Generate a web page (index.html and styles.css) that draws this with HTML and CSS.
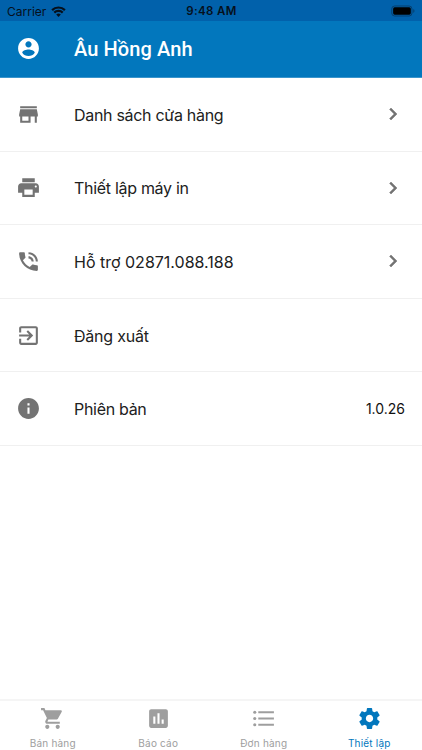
FILE: index.html
```html
<!DOCTYPE html>
<html lang="vi">
<head>
<meta charset="utf-8">
<title>Thiết lập</title>
<link rel="stylesheet" href="styles.css">
</head>
<body>
<div class="status">
  <div class="carrier"><span>Carrier</span>
    <svg class="wifi" viewBox="0 0 16 12"><path d="M8 12 5.500 9.300a3.600 3.600 0 0 1 5 0z"/><path class="arc" d="M3.400 7.200a6.500 6.500 0 0 1 9.200 0M1 4.500a10 10 0 0 1 14 0"/></svg>
  </div>
  <div class="time">9:48 AM</div>
  <div class="battery"><svg viewBox="0 0 26 12"><rect class="shell" x=".8" y=".8" width="21" height="10.400" rx="3"/><rect x="2.200" y="2.200" width="18.400" height="7.600" rx="1.600"/><path class="tip" d="M23.200 4v4c1.600-.6 1.600-3.400 0-4z"/></svg></div>
</div>
<header class="header">
  <svg class="icon" viewBox="0 0 24 24"><path d="M12 2C6.480 2 2 6.480 2 12s4.480 10 10 10 10-4.480 10-10S17.520 2 12 2zm0 3c1.660 0 3 1.340 3 3s-1.340 3-3 3-3-1.340-3-3 1.340-3 3-3zm0 14.200c-2.500 0-4.710-1.280-6-3.220.03-1.990 4-3.080 6-3.080 1.990 0 5.970 1.090 6 3.080-1.290 1.940-3.500 3.220-6 3.220z"/></svg>
  <h1 class="title">Âu Hồng Anh</h1>
</header>
<main class="list">
  <div class="row">
    <svg class="icon" viewBox="0 0 24 24"><path d="M20 4H4v2h16V4zm1 10v-2l-1-5H4l-1 5v2h1v6h10v-6h4v6h2v-6h1zm-9 4H6v-4h6v4z"/></svg>
    <span class="label store">Danh sách cửa hàng</span>
    <svg class="chevron" viewBox="0 0 24 24"><path d="M10 6 8.590 7.410 13.170 12l-4.580 4.590L10 18l6-6z"/></svg>
  </div>
  <div class="row">
    <svg class="icon" viewBox="0 0 24 24"><path d="M19 8H5c-1.660 0-3 1.340-3 3v6h4v4h12v-4h4v-6c0-1.660-1.340-3-3-3zm-3 11H8v-5h8v5zm3-7c-.55 0-1-.45-1-1s.45-1 1-1 1 .45 1 1-.45 1-1 1zm-1-9H6v4h12V3z"/></svg>
    <span class="label printer">Thiết lập máy in</span>
    <svg class="chevron" viewBox="0 0 24 24"><path d="M10 6 8.590 7.410 13.170 12l-4.580 4.590L10 18l6-6z"/></svg>
  </div>
  <div class="row">
    <svg class="icon" viewBox="0 0 24 24"><path d="M20 15.500c-1.250 0-2.450-.2-3.570-.57-.35-.11-.74-.03-1.020.24l-2.200 2.200c-2.830-1.440-5.150-3.750-6.590-6.590l2.200-2.210c.28-.26.36-.65.25-1C8.700 6.450 8.500 5.250 8.500 4c0-.55-.45-1-1-1H4c-.55 0-1 .45-1 1 0 9.390 7.610 17 17 17 .55 0 1-.45 1-1v-3.500c0-.55-.45-1-1-1zM19 12h2c0-4.970-4.030-9-9-9v2c3.870 0 7 3.130 7 7zm-4 0h2c0-2.760-2.240-5-5-5v2c1.660 0 3 1.340 3 3z"/></svg>
    <span class="label support">Hỗ trợ 02871.088.188</span>
    <svg class="chevron" viewBox="0 0 24 24"><path d="M10 6 8.590 7.410 13.170 12l-4.580 4.590L10 18l6-6z"/></svg>
  </div>
  <div class="row">
    <svg class="icon" viewBox="0 0 24 24"><path d="M10.090 15.590 11.500 17l5-5-5-5-1.410 1.410L12.670 11H3v2h9.670l-2.580 2.590zM19 3H5c-1.110 0-2 .9-2 2v4h2V5h14v14H5v-4H3v4c0 1.100.89 2 2 2h14c1.100 0 2-.9 2-2V5c0-1.100-.9-2-2-2z"/></svg>
    <span class="label logout">Đăng xuất</span>
  </div>
  <div class="row">
    <svg class="icon" viewBox="0 0 24 24"><path d="M12 2C6.480 2 2 6.480 2 12s4.480 10 10 10 10-4.480 10-10S17.520 2 12 2zm1 15h-2v-6h2v6zm0-8h-2V7h2v2z"/></svg>
    <span class="label about">Phiên bản</span>
    <span class="version">1.0.26</span>
  </div>
</main>
<nav class="tabs">
  <div class="tab"><svg class="icon" viewBox="0 0 24 24"><path d="M7 18c-1.100 0-1.990.9-1.990 2S5.900 22 7 22s2-.9 2-2-.9-2-2-2zM1 2v2h2l3.600 7.590-1.350 2.450c-.16.28-.25.61-.25.96 0 1.100.9 2 2 2h12v-2H7.420c-.14 0-.25-.11-.25-.25l.03-.12.9-1.630h7.450c.75 0 1.410-.41 1.750-1.030l3.580-6.490A1.003 1.003 0 0 0 20 4H5.210l-.94-2H1zm16 16c-1.100 0-1.990.9-1.990 2s.89 2 1.990 2 2-.9 2-2-.9-2-2-2z"/></svg><span>Bán hàng</span></div>
  <div class="tab"><svg class="icon" viewBox="0 0 24 24"><path d="M19 3H5c-1.100 0-2 .9-2 2v14c0 1.100.9 2 2 2h14c1.100 0 2-.9 2-2V5c0-1.100-.9-2-2-2zM9 17H7v-7h2v7zm4 0h-2V7h2v10zm4 0h-2v-4h2v4z"/></svg><span>Báo cáo</span></div>
  <div class="tab"><svg class="icon" viewBox="0 0 24 24"><circle cx="3.600" cy="6" r="1.500"/><circle cx="3.600" cy="12" r="1.500"/><circle cx="3.600" cy="18" r="1.500"/><path d="M7 5h15v2H7zM7 11h15v2H7zM7 17h15v2H7z"/></svg><span>Đơn hàng</span></div>
  <div class="tab active"><svg class="icon" viewBox="0 0 24 24"><path d="M19.430 12.980c.04-.32.07-.64.07-.98s-.03-.66-.07-.98l2.110-1.650c.19-.15.24-.42.12-.64l-2-3.460c-.12-.22-.39-.3-.61-.22l-2.490 1c-.52-.4-1.080-.73-1.690-.98l-.38-2.650A.488.488 0 0 0 14 2h-4c-.25 0-.46.18-.49.42l-.38 2.650c-.61.25-1.170.59-1.690.98l-2.490-1c-.23-.09-.49 0-.61.22l-2 3.460c-.13.22-.07.49.12.64l2.110 1.650c-.04.32-.07.65-.07.98s.03.66.07.98l-2.110 1.650c-.19.15-.24.42-.12.64l2 3.460c.12.22.39.3.61.22l2.490-1c.52.4 1.080.73 1.690.98l.38 2.650c.03.24.24.42.49.42h4c.25 0 .46-.18.49-.42l.38-2.650c.61-.25 1.170-.59 1.690-.98l2.490 1c.23.09.49 0 .61-.22l2-3.460c.12-.22.07-.49-.12-.64l-2.110-1.650zM12 15.500c-1.930 0-3.500-1.570-3.500-3.500s1.570-3.500 3.500-3.500 3.500 1.570 3.500 3.500-1.570 3.500-3.500 3.500z"/></svg><span>Thiết lập</span></div>
</nav>
</body>
</html>
```
FILE: styles.css
```css
* { box-sizing: border-box; }
body {
  margin: 0;
  width: 422px;
  height: 750px;
  display: flex;
  flex-direction: column;
  overflow: hidden;
  background: #fff;
  color: #212121;
  font-family: Inter, "Liberation Sans", sans-serif;
}
svg { display: block; fill: currentColor; flex: none; }
.status {
  height: 21px;
  flex: none;
  display: grid;
  grid-template-columns: 1fr auto 1fr;
  align-items: center;
  padding: 1px 6px 0 7px;
  background: #0161ab;
  color: #06101c;
  font-size: 12px;
}
.carrier { display: flex; align-items: center; gap: 5px; }
.wifi { width: 15px; height: 11px; }
.wifi .arc { fill: none; stroke: currentColor; stroke-width: 2.400; }
.time { font-size: 11.500px; font-weight: 600; letter-spacing: .35px; }
.battery { justify-self: end; }
.battery svg { width: 25px; height: 12px; color: #000; }
.battery .shell { fill: none; stroke: #063e6d; stroke-width: 1; }
.battery .tip { fill: #063e6d; }
.header {
  height: 57px;
  flex: none;
  display: flex;
  align-items: center;
  padding: 0 16px 1px;
  background: #0277bd;
  color: #fff;
  border-bottom: 1px solid #3b95cc;
}
.icon { width: 25px; height: 25px; }
.title {
  margin: 0 0 0 33px;
  font: 500 20px/24px Roboto, sans-serif;
  letter-spacing: .1px;
}
.row {
  height: 73.600px;
  display: flex;
  align-items: center;
  padding: 0 17px 0 16px;
  border-bottom: 1px solid #f0f0f0;
}
.row .icon { color: #737373; }
.label { margin-left: 33px; padding-top: 1px; font-size: 16px; line-height: 24px; white-space: nowrap; }
.store, .printer, .about { letter-spacing: -.3px; }
.logout { letter-spacing: -.22px; }
.chevron { width: 24px; height: 24px; margin-left: auto; color: #737373; stroke: currentColor; stroke-width: .5; }
.version { margin-left: auto; font-size: 14px; color: #111; }
.tabs {
  height: 51px;
  flex: none;
  margin-top: auto;
  display: grid;
  grid-template-columns: repeat(4, 1fr);
  border-top: 2px solid #f5f5f5;
  color: #9e9e9e;
}
.tab {
  display: flex;
  flex-direction: column;
  align-items: center;
  padding-top: 5px;
  font-size: 10px;
  line-height: 14px;
  letter-spacing: .2px;
}
.tab span { margin-top: 5px; }
.active { color: #0277bd; }
```
